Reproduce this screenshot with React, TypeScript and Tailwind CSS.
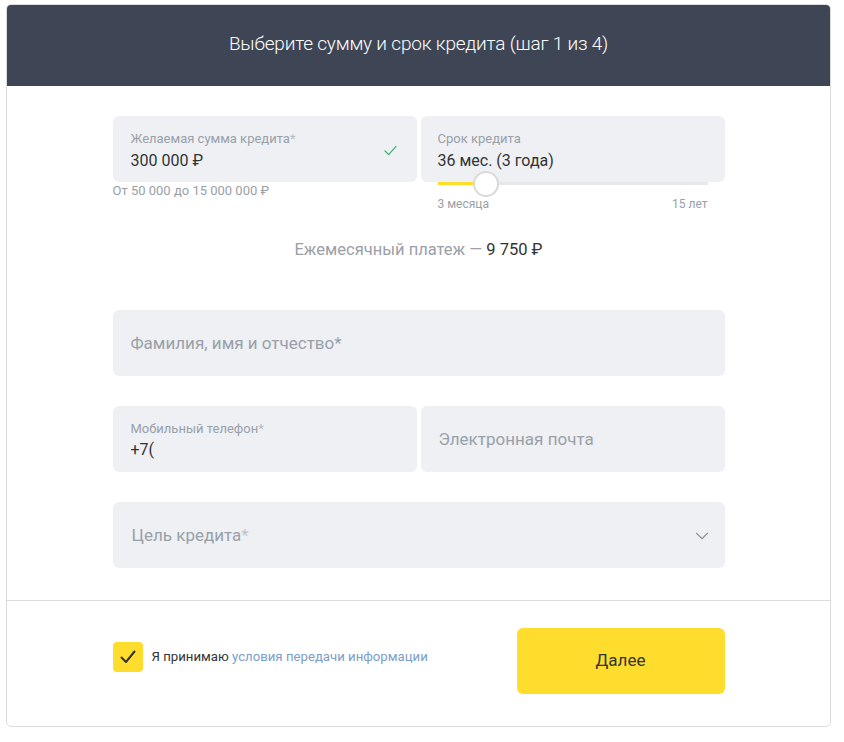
import { ChevronDown } from "lucide-react";

function CheckIcon({ className }: { className?: string }) {
  return (
    <svg viewBox="0 0 14 12" className={className} fill="none">
      <path d="M1 6.5l4 4L13 1.5" stroke="currentColor" strokeWidth="1.3" strokeLinecap="round" strokeLinejoin="round" />
    </svg>
  );
}

export default function App() {
  // slider: 36 months out of 3..180
  const pct = ((36 - 3) / (180 - 3)) * 100;

  return (
    <div className="bg-white min-h-[742px] pt-[4px] font-['Roboto',sans-serif]">
      <div className="ml-[6px] w-[825px] rounded-[5px] border border-[#dcdcdc] overflow-hidden">
        {/* Header */}
        <div className="bg-[#3e4656] h-[81px] flex items-center justify-center pb-[3px]">
          <h1 className="text-white text-[19px] font-light tracking-[-0.2px]">
            Выберите сумму и срок кредита (шаг 1 из 4)
          </h1>
        </div>

        {/* Form */}
        <div className="w-[612px] mx-auto pt-[30px] pb-[32px]">
          <div className="grid grid-cols-2 gap-[4px] h-[122px]">
            <div>
              <div className="h-[66px] rounded-[6px] bg-[#eef0f4] px-[18px] pt-[14px] flex justify-between">
                <div>
                  <div className="text-[13px] leading-[18px] text-[#9aa0a8]">
                    Желаемая сумма кредита<span className="text-[#b8bcc2]">*</span>
                  </div>
                  <div className="text-[16px] leading-[24px] text-[#333333] mt-[1px]">300 000 ₽</div>
                </div>
                <CheckIcon className="w-[13px] h-[11px] text-[#3bb26a] mt-[15px] mr-[2px]" />
              </div>
              <div className="text-[13px] leading-[16px] text-[#9aa0a8] mt-[1px]">От 50 000 до 15 000 000 ₽</div>
            </div>
            <div>
              <div className="relative h-[66px] rounded-[6px] bg-[#eef0f4] px-[17px] pt-[14px]">
                <div className="text-[13px] leading-[18px] text-[#9aa0a8]">Срок кредита</div>
                <div className="text-[16px] leading-[24px] text-[#333333] mt-[1px]">36 мес. (3 года)</div>
                <div className="absolute left-[17px] right-[17px] bottom-[-3px] h-[3px] bg-[#e8e8e8]">
                  <div className="h-full bg-[#ffdd2d]" style={{ width: `${pct}%` }} />
                  <div
                    className="absolute top-1/2 w-[26px] h-[26px] -translate-x-1/2 -translate-y-1/2 rounded-full bg-white border-2 border-[#dadada]"
                    style={{ left: `calc(${pct}% - 2px)` }}
                  />
                </div>
              </div>
              <div className="flex justify-between px-[17px] mt-[15px] text-[12px] leading-[14px] text-[#9aa0a8]">
                <span>3 месяца</span>
                <span>15 лет</span>
              </div>
            </div>
          </div>

          <div className="text-center text-[16.5px] leading-[24px] text-[#9aa0a8]">
            Ежемесячный платеж — <span className="text-[#333333]">9 750 ₽</span>
          </div>

          <div className="mt-[48px] h-[66px] rounded-[6px] bg-[#eef0f4] px-[18px] pt-[1px] flex items-center text-[17px] text-[#9aa0a8]">
            Фамилия, имя и отчество*
          </div>

          <div className="mt-[30px] grid grid-cols-2 gap-[4px]">
            <div className="h-[66px] rounded-[6px] bg-[#eef0f4] px-[18px] pt-[14px]">
              <div className="text-[13px] leading-[17px] text-[#9aa0a8]">
                Мобильный телефон<span className="text-[#b8bcc2]">*</span>
              </div>
              <div className="text-[16px] leading-[24px] text-[#333333] mt-[1px]">+7(</div>
            </div>
            <div className="h-[66px] rounded-[6px] bg-[#eef0f4] px-[18px] pt-[1px] flex items-center text-[17px] text-[#9aa0a8]">
              Электронная почта
            </div>
          </div>

          <div className="mt-[30px] h-[66px] rounded-[6px] bg-[#eef0f4] pl-[19px] pr-[12px] pt-[1px] flex items-center justify-between text-[17px] text-[#9aa0a8]">
            <span>
              Цель кредита<span className="text-[#c0c4ca]">*</span>
            </span>
            <ChevronDown className="w-[22px] h-[22px] text-[#8e939a]" strokeWidth={1.2} />
          </div>
        </div>

        {/* Footer */}
        <div className="border-t border-[#dcdcdc]">
          <div className="w-[612px] mx-auto pt-[27px] pb-[32px] flex items-start justify-between">
            <div className="flex items-center mt-[14px] gap-[9px]">
              <div className="w-[30px] h-[30px] rounded-[4px] bg-[#ffdd2d] flex items-center justify-center">
                <svg viewBox="0 0 16 14" className="w-[16px] h-[14px]" fill="none">
                  <path d="M1.5 7.5l4.5 4.5L14.5 1.5" stroke="#333333" strokeWidth="2" strokeLinecap="round" strokeLinejoin="round" />
                </svg>
              </div>
              <span className="text-[13.2px] text-[#333333]">
                Я принимаю <span className="text-[#7c9cc9]">условия передачи информации</span>
              </span>
            </div>
            <button className="w-[208px] h-[66px] rounded-[6px] bg-[#ffdd2d] text-[17px] text-[#333333]">
              Далее
            </button>
          </div>
        </div>
      </div>
    </div>
  );
}
